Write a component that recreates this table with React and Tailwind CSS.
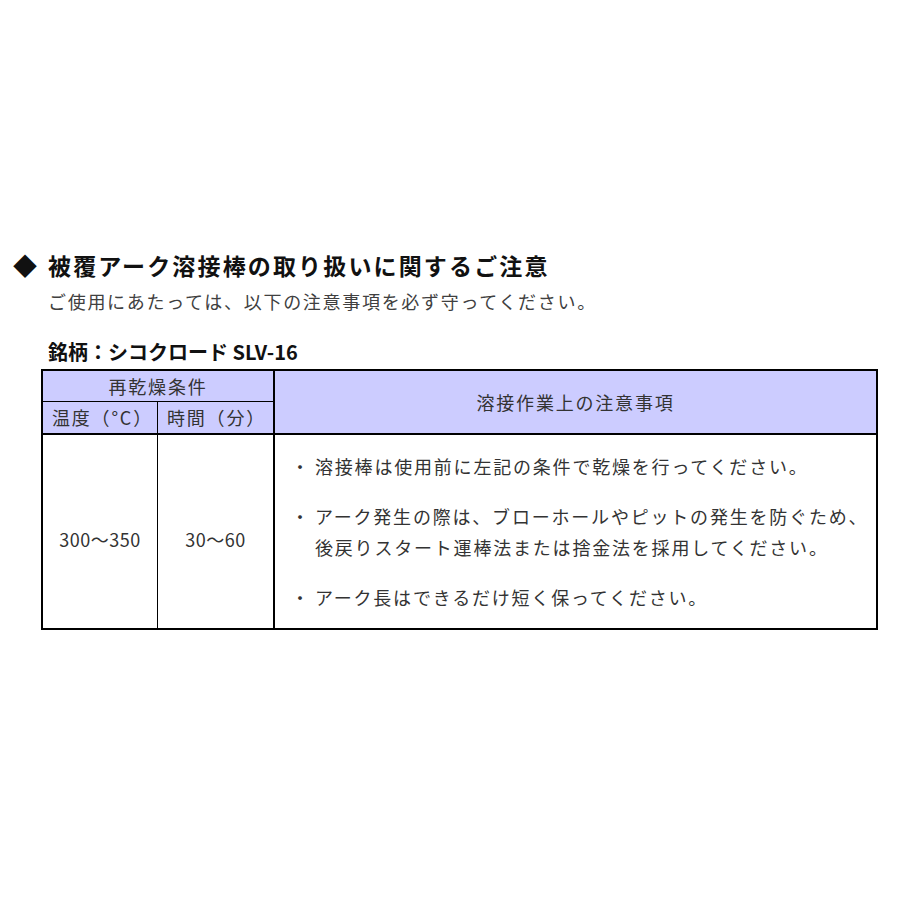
export default function App() {
  const font = { fontFamily: '"Noto Sans CJK JP", "Noto Sans", sans-serif' };
  return (
    <div className="w-[920px] h-[920px] bg-white" style={font}>
      <div className="pt-[249px] pl-[13px]">
        <div className="flex items-center h-[32px] text-[23px] font-bold text-[#111] tracking-[2.15px] leading-[32px]">
          <span className="w-[35px] text-[24px]">◆</span>
          <span>被覆アーク溶接棒の取り扱いに関するご注意</span>
        </div>
        <div className="mt-[5px] pl-[35px] h-[30px] leading-[30px] text-[18px] tracking-[1.7px] text-[#404040]">
          ご使用にあたっては、以下の注意事項を必ず守ってください。
        </div>
        <div className="mt-[23px] pl-[35px] h-[26px] leading-[26px] text-[20px] font-bold text-[#111]">
          銘柄：シコクロード SLV-16
        </div>
      </div>
      <div className="mt-[4px] ml-[41px] w-[837px] border-2 border-black text-[#333] text-[18px] tracking-[1.8px]">
        <div className="flex bg-[#ccccff] border-b-2 border-black">
          <div className="w-[230px] flex flex-col">
            <div className="h-[31px] border-b border-black flex items-center justify-center">
              再乾燥条件
            </div>
            <div className="flex h-[31px]">
              <div className="w-[115px] border-r border-black flex items-center pl-[9px]">温度（°C）</div>
              <div className="flex-1 flex items-center pl-[9px]">時間（分）</div>
            </div>
          </div>
          <div className="flex-1 border-l-2 border-black flex items-center justify-center">
            溶接作業上の注意事項
          </div>
        </div>
        <div className="flex h-[193px]">
          <div className="w-[115px] border-r border-black flex items-center justify-center pt-[16px] tracking-[0.5px]">
            300〜350
          </div>
          <div className="w-[115px] flex items-center justify-center pt-[16px] tracking-[0.5px]">
            30〜60
          </div>
          <div className="flex-1 border-l-2 border-black pt-[16px] pl-[16px] flex flex-col gap-[19px] leading-[31px]">
            <div className="flex">
              <span className="w-[24px]">・</span>
              <span>溶接棒は使用前に左記の条件で乾燥を行ってください。</span>
            </div>
            <div className="flex">
              <span className="w-[24px]">・</span>
              <span>
                アーク発生の際は、ブローホールやピットの発生を防ぐため、
                <br />
                後戻りスタート運棒法または捨金法を採用してください。
              </span>
            </div>
            <div className="flex">
              <span className="w-[24px]">・</span>
              <span>アーク長はできるだけ短く保ってください。</span>
            </div>
          </div>
        </div>
      </div>
    </div>
  );
}
